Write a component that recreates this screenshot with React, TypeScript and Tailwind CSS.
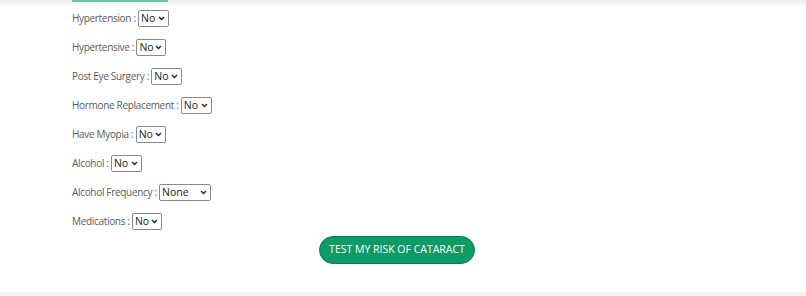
import React from "react";

const rows: { label: string; options: string[]; w: string }[] = [
  { label: "Hypertension", options: ["No", "Yes"], w: "w-[31px]" },
  { label: "Hypertensive", options: ["No", "Yes"], w: "w-[30px]" },
  { label: "Post Eye Surgery", options: ["No", "Yes"], w: "w-[31px]" },
  { label: "Hormone Replacement", options: ["No", "Yes"], w: "w-[31px]" },
  { label: "Have Myopia", options: ["No", "Yes"], w: "w-[30px]" },
  { label: "Alcohol", options: ["No", "Yes"], w: "w-[31px]" },
  { label: "Alcohol Frequency", options: ["None", "Rarely", "Often"], w: "w-[52px]" },
  { label: "Medications", options: ["No", "Yes"], w: "w-[30px]" },
];

const font = '"Open Sans", "Liberation Sans", sans-serif';

export default function App() {
  return (
    <div
      className="relative w-[806px] h-[296px] bg-white overflow-hidden text-[#5a5a5a]"
      style={{ fontFamily: font }}
    >
      <div className="absolute top-0 left-0 right-0 h-[7px] bg-gradient-to-b from-[#ececec] to-white" />
      <div className="absolute top-0 left-[72px] w-[96px] h-[2px] bg-[#6cc4a1]" />
      <div className="relative pt-[4px] pl-[72px] flex flex-col">
        {rows.map((r) => (
          <div key={r.label} className="h-[29px] flex items-center text-[10px] tracking-[-0.32px]">
            <span className="whitespace-pre">{r.label} : </span>
            <div className={`relative ${r.w} h-[17px]`}>
              <select
                className="appearance-none w-full h-full border border-[#8a8a8a] rounded-[2px] text-[10.5px] text-[#222] bg-white leading-none pl-[2px] tracking-normal outline-none"
                style={{ fontFamily: font }}
                defaultValue={r.options[0]}
              >
                {r.options.map((o) => (
                  <option key={o}>{o}</option>
                ))}
              </select>
              <svg
                className="absolute right-[4px] top-[6px] pointer-events-none"
                width="7"
                height="5"
                viewBox="0 0 7 5"
              >
                <path d="M1 1 L3.5 3.5 L6 1" stroke="#222" strokeWidth="1.4" fill="none" />
              </svg>
            </div>
          </div>
        ))}
        <div className="flex justify-center pr-[84px]">
          <button className="h-[28px] w-[156px] rounded-full bg-[#0c9a66] border border-[#0a7f55] text-white text-[10.5px] uppercase whitespace-nowrap">
            Test my risk of cataract
          </button>
        </div>
      </div>
      <div className="absolute bottom-0 left-0 right-0 h-[4px] bg-[#f5f5f5]" />
    </div>
  );
}
